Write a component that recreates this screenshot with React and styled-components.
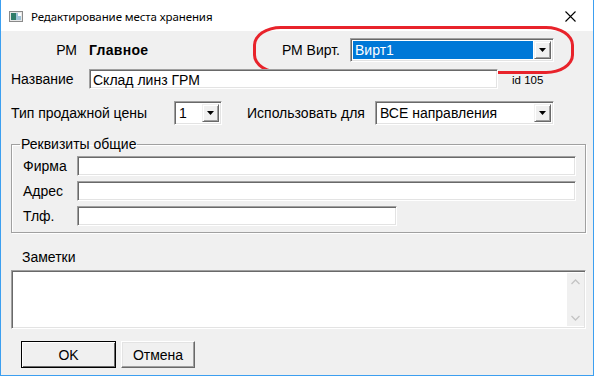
import React from 'react'
import styled, { createGlobalStyle } from 'styled-components'

const GlobalStyle = createGlobalStyle`
    html, body {
        margin: 0;
        padding: 0;
        background: #ffffff;
    }
    body {
        font-family: "Liberation Sans", Arial, sans-serif;
        font-size: 14px;
        color: #000;
    }
`;

function DropArrow() {
    return (
        <svg width="7" height="4" viewBox="0 0 7 4">
            <path d="M0 0h7L3.5 4z" fill="#000" />
        </svg>
    )
}

function Select({ value, width, selected }) {
    return (
        <SelectBox $width={width}>
            <SelectValue $selected={selected}>{value}</SelectValue>
            <DropButton><DropArrow /></DropButton>
        </SelectBox>
    )
}

function Dialog() {
    return (
        <Window>
            <TitleBar>
                <svg width="14" height="11" viewBox="0 0 14 11">
                    <rect x="0.5" y="0.5" width="13" height="10" fill="#e8e8e8" stroke="#8a8a8a" />
                    <rect x="2" y="2" width="5" height="7" fill="#2f7d6a" />
                    <rect x="7" y="2" width="5" height="7" fill="#9fc4d8" />
                    <rect x="9" y="2" width="3" height="3" fill="#ffffff" />
                </svg>
                <Title>Редактирование места хранения</Title>
                <Close>
                    <svg width="11" height="11" viewBox="0 0 11 11">
                        <path d="M0.5 0.5l10 10M10.5 0.5l-10 10" stroke="#000" strokeWidth="1.1" />
                    </svg>
                </Close>
            </TitleBar>

            <Body>
                <Row $height={24}>
                    <Label $width={66} $align="right">РМ</Label>
                    <Strong>Главное</Strong>
                    <Label $width={121} $align="right">РМ Вирт.</Label>
                    <Gap $w={10} />
                    <Select value="Вирт1" width={204} selected />
                    <Highlight />
                </Row>

                <Row $height={20} $top={7}>
                    <Label $width={78}>Название</Label>
                    <TextInput $width={409} value="Склад линз ГРМ" readOnly />
                    <Small>id 105</Small>
                </Row>

                <Row $height={24} $top={12}>
                    <Label $width={163}>Тип продажной цены</Label>
                    <Select value="1" width={48} />
                    <Gap $w={25} />
                    <Label $width={128}>Использовать для</Label>
                    <Select value="ВСЕ направления" width={179} />
                </Row>

                <Group>
                    <Legend>Реквизиты общие</Legend>
                    <GroupRow>
                        <Label $width={54}>Фирма</Label>
                        <TextInput $width={499} readOnly />
                    </GroupRow>
                    <GroupRow>
                        <Label $width={54}>Адрес</Label>
                        <TextInput $width={499} readOnly />
                    </GroupRow>
                    <GroupRow>
                        <Label $width={54}>Тлф.</Label>
                        <TextInput $width={320} readOnly />
                    </GroupRow>
                </Group>

                <NotesLabel>Заметки</NotesLabel>
                <Notes>
                    <NotesArea />
                    <ScrollTrack>
                        <svg width="9" height="6" viewBox="0 0 9 6">
                            <path d="M0.5 5L4.5 1l4 4" fill="none" stroke="#c4c4c4" strokeWidth="1.3" />
                        </svg>
                        <svg width="9" height="6" viewBox="0 0 9 6">
                            <path d="M0.5 1l4 4 4-4" fill="none" stroke="#c4c4c4" strokeWidth="1.3" />
                        </svg>
                    </ScrollTrack>
                </Notes>

                <Buttons>
                    <Button $width={95} $default>OK</Button>
                    <Button $width={74}>Отмена</Button>
                </Buttons>
            </Body>
        </Window>
    )
}

export default function App() {
    return (
        <>
            <GlobalStyle />
            <Dialog />
        </>
    )
}

const Window = styled.div`
    width: 594px;
    height: 376px;
    box-sizing: border-box;
    border: 1px solid #3c9ff0;
    border-top: none;
    display: flex;
    flex-direction: column;
    background: #f0f0f0;
`;

const TitleBar = styled.div`
    height: 31px;
    flex: none;
    background: #ffffff;
    display: flex;
    align-items: center;
    padding-left: 8px;
    padding-top: 1px;
    box-sizing: border-box;
    svg { flex: none; }
`;

const Title = styled.span`
    font-family: "Noto Sans", "Open Sans", sans-serif;
    font-size: 11.5px;
    margin-left: 8px;
    flex: 1;
    letter-spacing: -0.1px;
`;

const Close = styled.div`
    width: 44px;
    display: flex;
    justify-content: center;
    margin-right: 1px;
`;

const Body = styled.div`
    flex: 1;
    padding: 7px 7px 0 10px;
    display: flex;
    flex-direction: column;
`;

const Row = styled.div`
    position: relative;
    display: flex;
    align-items: center;
    height: ${p => p.$height}px;
    margin-top: ${p => p.$top || 0}px;
`;

const Label = styled.span`
    width: ${p => p.$width}px;
    flex: none;
    text-align: ${p => p.$align || 'left'};
    white-space: nowrap;
`;

const Strong = styled.span`
    font-weight: bold;
    margin-left: 12px;
    width: 130px;
    letter-spacing: 0.3px;
`;

const Gap = styled.span`
    width: ${p => p.$w}px;
    flex: none;
`;

const Highlight = styled.div`
    position: absolute;
    left: 242px;
    top: -12px;
    width: 315px;
    height: 42px;
    border: 3px solid #e8232b;
    border-radius: 28px / 19px;
    pointer-events: none;
`;

const sunken = `
    box-sizing: border-box;
    border: 1px solid;
    border-color: #a0a0a0 #ffffff #ffffff #a0a0a0;
    box-shadow: inset 1px 1px 0 #696969, inset -1px -1px 0 #e3e3e3;
    background: #ffffff;
`;

const TextInput = styled.input`
    ${sunken}
    width: ${p => p.$width}px;
    height: 20px;
    padding: 1px 3px 0;
    font: inherit;
    font-size: 14px;
    outline: none;
    margin: 0;
`;

const Small = styled.span`
    font-size: 11.5px;
    margin-left: 14px;
    margin-top: 2px;
`;

const SelectBox = styled.div`
    ${sunken}
    width: ${p => p.$width}px;
    height: 24px;
    flex: none;
    display: flex;
    align-items: stretch;
    padding: 2px;
`;

const SelectValue = styled.div`
    flex: 1;
    display: flex;
    align-items: center;
    padding-left: 2px;
    margin-right: 1px;
    font-size: 14px;
    background: ${p => p.$selected ? '#0078d7' : 'transparent'};
    color: ${p => p.$selected ? '#ffffff' : '#000'};
`;

const DropButton = styled.div`
    width: 17px;
    flex: none;
    box-sizing: border-box;
    background: #f0f0f0;
    border: 1px solid;
    border-color: #f0f0f0 #696969 #696969 #f0f0f0;
    box-shadow: inset 1px 1px 0 #ffffff, inset -1px -1px 0 #a0a0a0;
    display: flex;
    align-items: center;
    justify-content: center;
`;

const Group = styled.fieldset`
    margin: 12px 8px 0 0;
    padding: 5px 9px 6px 11px;
    border: 1px solid #a0a0a0;
    box-shadow: 1px 1px 0 #ffffff, inset 1px 1px 0 #ffffff;
    display: flex;
    flex-direction: column;
    gap: 5px;
    height: 96px;
    box-sizing: border-box;
`;

const Legend = styled.legend`
    padding: 0 1px;
    margin-left: -3px;
    font-size: 14px;
    line-height: 14px;
`;

const GroupRow = styled.div`
    display: flex;
    align-items: center;
    height: 20px;
`;

const NotesLabel = styled.div`
    margin: 16px 0 0 11px;
    height: 16px;
    line-height: 16px;
`;

const Notes = styled.div`
    ${sunken}
    margin-top: 5px;
    width: 575px;
    height: 59px;
    display: flex;
    padding: 2px 1px 2px 2px;
`;

const NotesArea = styled.div`
    flex: 1;
    background: #ffffff;
`;

const ScrollTrack = styled.div`
    width: 17px;
    background: #f0f0f0;
    display: flex;
    flex-direction: column;
    align-items: center;
    justify-content: space-between;
    padding: 6px 0 5px;
    box-sizing: border-box;
`;

const Buttons = styled.div`
    display: flex;
    gap: 5px;
    margin: 12px 0 0 10px;
`;

const Button = styled.button`
    width: ${p => p.$width}px;
    height: 27px;
    box-sizing: border-box;
    font-family: "Liberation Sans", Arial, sans-serif;
    font-size: 14px;
    color: #000;
    background: #f0f0f0;
    border: 1px solid;
    border-color: ${p => p.$default ? '#000000' : '#ffffff #696969 #696969 #ffffff'};
    box-shadow: ${p => p.$default
        ? 'inset 1px 1px 0 #ffffff, inset -1px -1px 0 #696969'
        : 'inset -1px -1px 0 #a0a0a0, inset 1px 1px 0 #e3e3e3'};
    padding: 0;
`;
